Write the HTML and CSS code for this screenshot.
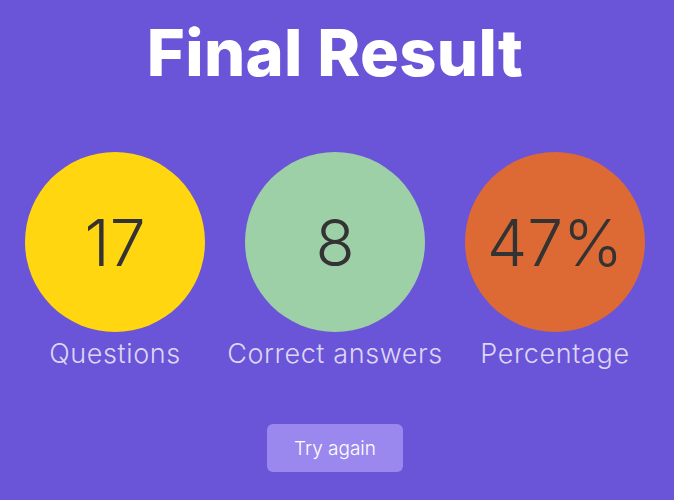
FILE: index.html
```html
<!DOCTYPE html>
<html>
<head>
<meta charset="utf-8">
<link rel="stylesheet" href="styles.css">
</head>
<body>
<main class="result">
  <h1 class="title">Final Result</h1>
  <div class="stats">
    <div class="stat">
      <div class="circle yellow">17</div>
      <div class="label">Questions</div>
    </div>
    <div class="stat">
      <div class="circle green">8</div>
      <div class="label">Correct answers</div>
    </div>
    <div class="stat">
      <div class="circle orange">47%</div>
      <div class="label">Percentage</div>
    </div>
  </div>
  <button class="retry">Try again</button>
</main>
</body>
</html>
```
FILE: styles.css
```css
html, body {
  margin: 0;
  padding: 0;
  background: #6a54d8;
  height: 100%;
}
body {
  font-family: "Inter", "Lato", sans-serif;
}
.result {
  display: flex;
  flex-direction: column;
  align-items: center;
  padding-right: 4px;
}
.title {
  margin: 13px 0 0;
  font-size: 65px;
  font-weight: 800;
  color: #ffffff;
  line-height: 80px;
  letter-spacing: 0.3px;
}
.stats {
  display: flex;
  gap: 40px;
  margin-top: 59px;
}
.stat {
  width: 180px;
  display: flex;
  flex-direction: column;
  align-items: center;
}
.circle {
  width: 180px;
  height: 180px;
  border-radius: 50%;
  display: flex;
  align-items: center;
  justify-content: center;
  font-size: 64px;
  font-weight: 300;
  color: #333333;
}
.yellow { background: #ffd60f; }
.green { background: #9dd0a6; }
.orange { background: #dd6a34; }
.label {
  margin-top: 3px;
  font-size: 27px;
  font-weight: 300;
  color: #ddd6f5;
  white-space: nowrap;
  line-height: 38px;
  letter-spacing: 0.6px;
}
.retry {
  margin-top: 51px;
  width: 136px;
  height: 48px;
  border: none;
  border-radius: 6px;
  background: #9b88ee;
  color: #ffffff;
  font-family: inherit;
  font-size: 19px;
  font-weight: 300;
}
```
